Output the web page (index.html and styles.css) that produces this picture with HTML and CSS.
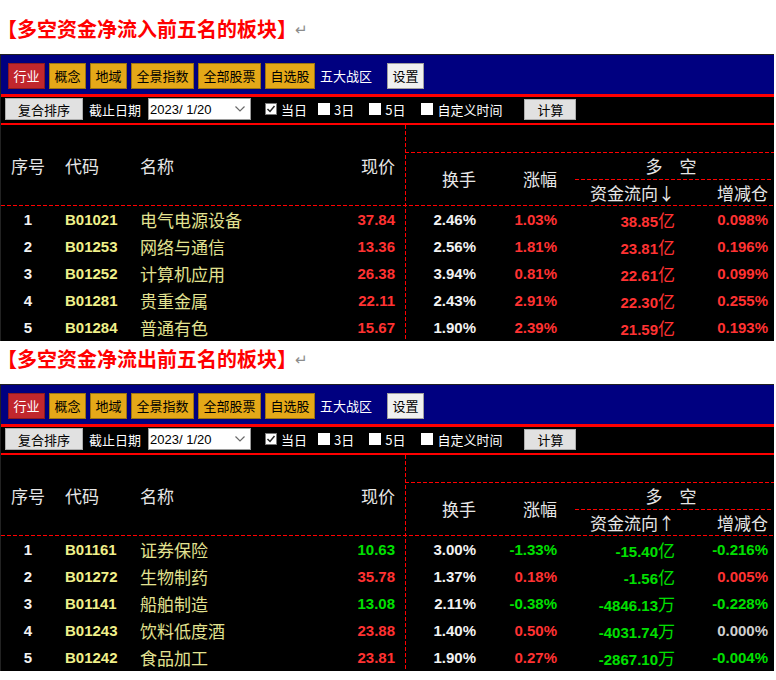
FILE: index.html
```html
<!DOCTYPE html>
<html lang="zh-CN">
<head>
<meta charset="utf-8">
<title>多空资金净流入/流出前五名的板块</title>
<link rel="stylesheet" href="styles.css">
</head>
<body>

<section class="sec sec1">
  <h2 class="title">【多空资金净流入前五名的板块】<span class="ret">↵</span></h2>
  <div class="panel">
    <div class="toolbar">
      <span class="tb-btn red">行业</span>
      <span class="tb-btn gold">概念</span>
      <span class="tb-btn gold">地域</span>
      <span class="tb-btn gold">全景指数</span>
      <span class="tb-btn gold">全部股票</span>
      <span class="tb-btn gold">自选股</span>
      <span class="tb-plain">五大战区</span>
      <span class="tb-btn set">设置</span>
    </div>
    <div class="datebar">
      <span class="gbtn sort">复合排序</span>
      <span class="lbl deadline">截止日期</span>
      <span class="combo"><span class="combo-text">2023/ 1/20</span><svg class="chev" width="10" height="6" viewBox="0 0 10 6"><polyline points="0.5,0.5 5,5 9.5,0.5" fill="none" stroke="#6a6a6a" stroke-width="1.2"/></svg></span>
      <span class="chk chk-day"><svg class="box" width="12" height="12" viewBox="0 0 12 12"><rect x="0.5" y="0.5" width="11" height="11" fill="#fff" stroke="#7a7a7a"/><polyline points="2.5,6 5,8.5 9.5,3" fill="none" stroke="#2a2a2a" stroke-width="1.5"/></svg><span>当日</span></span>
      <span class="chk chk-3"><i class="box-empty"></i><span>3日</span></span>
      <span class="chk chk-5"><i class="box-empty"></i><span>5日</span></span>
      <span class="chk chk-custom"><i class="box-empty"></i><span>自定义时间</span></span>
      <span class="gbtn calc">计算</span>
    </div>
    <div class="tbl">
      <div class="thead">
        <div class="th-left">
          <span class="h-no">序号</span><span class="h-code">代码</span><span class="h-name">名称</span><span class="h-price">现价</span>
        </div>
        <div class="th-right">
          <div class="th-top"></div>
          <div class="th-bottom">
            <span class="h-turn">换手</span>
            <span class="h-chg">涨幅</span>
            <span class="h-gap"></span>
            <div class="h-group">
              <div class="h-group-title">多　空</div>
              <div class="h-group-sub"><span class="h-flow">资金流向↓</span><span class="h-pos">增减仓</span></div>
            </div>
          </div>
        </div>
      </div>
      <div class="row"><span class="c-no">1</span><span class="c-code">B01021</span><span class="c-name">电气电源设备</span><span class="c-price up">37.84</span><span class="c-turn">2.46%</span><span class="c-chg up">1.03%</span><span class="c-flow up">38.85<span class="u">亿</span></span><span class="c-pos up">0.098%</span></div>
      <div class="row"><span class="c-no">2</span><span class="c-code">B01253</span><span class="c-name">网络与通信</span><span class="c-price up">13.36</span><span class="c-turn">2.56%</span><span class="c-chg up">1.81%</span><span class="c-flow up">23.81<span class="u">亿</span></span><span class="c-pos up">0.196%</span></div>
      <div class="row"><span class="c-no">3</span><span class="c-code">B01252</span><span class="c-name">计算机应用</span><span class="c-price up">26.38</span><span class="c-turn">3.94%</span><span class="c-chg up">0.81%</span><span class="c-flow up">22.61<span class="u">亿</span></span><span class="c-pos up">0.099%</span></div>
      <div class="row"><span class="c-no">4</span><span class="c-code">B01281</span><span class="c-name">贵重金属</span><span class="c-price up">22.11</span><span class="c-turn">2.43%</span><span class="c-chg up">2.91%</span><span class="c-flow up">22.30<span class="u">亿</span></span><span class="c-pos up">0.255%</span></div>
      <div class="row"><span class="c-no">5</span><span class="c-code">B01284</span><span class="c-name">普通有色</span><span class="c-price up">15.67</span><span class="c-turn">1.90%</span><span class="c-chg up">2.39%</span><span class="c-flow up">21.59<span class="u">亿</span></span><span class="c-pos up">0.193%</span></div>
    </div>
  </div>
</section>

<section class="sec sec2">
  <h2 class="title">【多空资金净流出前五名的板块】<span class="ret">↵</span></h2>
  <div class="panel">
    <div class="toolbar">
      <span class="tb-btn red">行业</span>
      <span class="tb-btn gold">概念</span>
      <span class="tb-btn gold">地域</span>
      <span class="tb-btn gold">全景指数</span>
      <span class="tb-btn gold">全部股票</span>
      <span class="tb-btn gold">自选股</span>
      <span class="tb-plain">五大战区</span>
      <span class="tb-btn set">设置</span>
    </div>
    <div class="datebar">
      <span class="gbtn sort">复合排序</span>
      <span class="lbl deadline">截止日期</span>
      <span class="combo"><span class="combo-text">2023/ 1/20</span><svg class="chev" width="10" height="6" viewBox="0 0 10 6"><polyline points="0.5,0.5 5,5 9.5,0.5" fill="none" stroke="#6a6a6a" stroke-width="1.2"/></svg></span>
      <span class="chk chk-day"><svg class="box" width="12" height="12" viewBox="0 0 12 12"><rect x="0.5" y="0.5" width="11" height="11" fill="#fff" stroke="#7a7a7a"/><polyline points="2.5,6 5,8.5 9.5,3" fill="none" stroke="#2a2a2a" stroke-width="1.5"/></svg><span>当日</span></span>
      <span class="chk chk-3"><i class="box-empty"></i><span>3日</span></span>
      <span class="chk chk-5"><i class="box-empty"></i><span>5日</span></span>
      <span class="chk chk-custom"><i class="box-empty"></i><span>自定义时间</span></span>
      <span class="gbtn calc">计算</span>
    </div>
    <div class="tbl">
      <div class="thead">
        <div class="th-left">
          <span class="h-no">序号</span><span class="h-code">代码</span><span class="h-name">名称</span><span class="h-price">现价</span>
        </div>
        <div class="th-right">
          <div class="th-top"></div>
          <div class="th-bottom">
            <span class="h-turn">换手</span>
            <span class="h-chg">涨幅</span>
            <span class="h-gap"></span>
            <div class="h-group">
              <div class="h-group-title">多　空</div>
              <div class="h-group-sub"><span class="h-flow">资金流向↑</span><span class="h-pos">增减仓</span></div>
            </div>
          </div>
        </div>
      </div>
      <div class="row"><span class="c-no">1</span><span class="c-code">B01161</span><span class="c-name">证券保险</span><span class="c-price down">10.63</span><span class="c-turn">3.00%</span><span class="c-chg down">-1.33%</span><span class="c-flow down">-15.40<span class="u">亿</span></span><span class="c-pos down">-0.216%</span></div>
      <div class="row"><span class="c-no">2</span><span class="c-code">B01272</span><span class="c-name">生物制药</span><span class="c-price up">35.78</span><span class="c-turn">1.37%</span><span class="c-chg up">0.18%</span><span class="c-flow down">-1.56<span class="u">亿</span></span><span class="c-pos up">0.005%</span></div>
      <div class="row"><span class="c-no">3</span><span class="c-code">B01141</span><span class="c-name">船舶制造</span><span class="c-price down">13.08</span><span class="c-turn">2.11%</span><span class="c-chg down">-0.38%</span><span class="c-flow down">-4846.13<span class="u">万</span></span><span class="c-pos down">-0.228%</span></div>
      <div class="row"><span class="c-no">4</span><span class="c-code">B01243</span><span class="c-name">饮料低度酒</span><span class="c-price up">23.88</span><span class="c-turn">1.40%</span><span class="c-chg up">0.50%</span><span class="c-flow down">-4031.74<span class="u">万</span></span><span class="c-pos flat">0.000%</span></div>
      <div class="row"><span class="c-no">5</span><span class="c-code">B01242</span><span class="c-name">食品加工</span><span class="c-price up">23.81</span><span class="c-turn">1.90%</span><span class="c-chg up">0.27%</span><span class="c-flow down">-2867.10<span class="u">万</span></span><span class="c-pos down">-0.004%</span></div>
    </div>
  </div>
</section>

</body>
</html>
```

FILE: styles.css
```css
* {
  box-sizing: border-box;
  margin: 0;
  padding: 0;
}

body {
  margin: 0;
  width: 776px;
  background: #fff;
  font-family: "Noto Sans CJK SC", "Liberation Sans", sans-serif;
}

/* ---------- section title ---------- */
.title {
  display: flex;
  align-items: center;
  height: 24px;
  margin: 17px 0 13px 0;
  padding-left: 7px;
  font-size: 20px;
  line-height: 24px;
  font-weight: 700;
  font-feature-settings: "halt";
  color: #f00;
  white-space: nowrap;
}

.sec2 .title {
  margin-top: 6px;
}

.ret {
  margin-left: 8px;
  font-size: 15px;
  font-weight: 400;
  color: #8c8c8c;
}

/* ---------- panel ---------- */
.panel {
  width: 774px;
  background: #000;
  border-top: 1px solid #222;
  border-left: 1px solid #222;
}

/* toolbar */
.toolbar {
  display: flex;
  align-items: flex-start;
  gap: 4px;
  height: 42px;
  padding: 8px 0 0 7px;
  background: #000080;
  border-bottom: 3px solid #f00;
}

.tb-btn {
  height: 26px;
  padding: 0 4.5px;
  border: 1px solid;
  font-size: 13px;
  line-height: 24px;
  white-space: nowrap;
}

.red {
  background: #c1272d;
  border-color: #8c1b1f;
  color: #fff;
}

.gold {
  background: #e5a818;
  border-color: #9c7410;
  color: #000;
}

.tb-plain {
  margin-left: 1px;
  font-size: 13px;
  line-height: 26px;
  color: #fff;
}

.set {
  margin-left: 11px;
  background: #f0f0f0;
  border-color: #a0a0a0;
  color: #000;
}

/* date bar */
.datebar {
  display: flex;
  align-items: center;
  height: 28px;
  padding: 0 0 2px 0;
  border-bottom: 2px solid #f00;
  font-size: 13px;
  color: #fff;
  white-space: nowrap;
}

.gbtn {
  display: flex;
  align-items: center;
  justify-content: center;
  height: 22px;
  background: #e1e1e1;
  border: 1px solid #adadad;
  color: #000;
  font-size: 13px;
}

.sort {
  width: 78px;
  margin-left: 4px;
}

.deadline {
  margin-left: 6px;
}

.combo {
  display: flex;
  align-items: center;
  justify-content: space-between;
  width: 103px;
  height: 22px;
  margin-left: 7px;
  padding: 0 5px 0 1px;
  background: #fff;
  border: 1px solid #9a9a9a;
}

.combo-text {
  font-family: "Liberation Sans", Arial, sans-serif;
  font-size: 13px;
  color: #000;
}

.chk {
  display: flex;
  align-items: center;
  gap: 4px;
}

.box-empty {
  display: block;
  width: 12px;
  height: 12px;
  background: #fff;
}

.chk-day {
  margin-left: 14px;
}

.chk-3 {
  margin-left: 11px;
}

.chk-5 {
  margin-left: 15px;
}

.chk-custom {
  margin-left: 16px;
}

.calc {
  width: 52px;
  height: 21px;
  margin-left: 22px;
}

/* ---------- table ---------- */
.tbl {
  background-image: linear-gradient(to bottom, #f00 4px, transparent 4px);
  background-size: 1px 6px;
  background-position: 404px 0;
  background-repeat: repeat-y;
}

.thead {
  display: flex;
  height: 81px;
  padding-bottom: 1px;
  background-image: linear-gradient(to right, #f00 4px, transparent 4px);
  background-size: 6px 1px;
  background-position: 0 100%;
  background-repeat: repeat-x;
  font-size: 17px;
  color: #e6e6e6;
  white-space: nowrap;
}

.th-left {
  display: grid;
  grid-template-columns: 54px 85px 161px 104px;
  align-items: center;
  width: 404px;
  height: 80px;
}

.h-no {
  text-align: center;
}

.h-code {
  padding-left: 10px;
}

.h-price {
  padding-right: 10px;
  text-align: right;
}

.th-right {
  width: 369px;
  height: 80px;
}

.th-top {
  height: 28px;
  background-image: linear-gradient(to right, #f00 4px, transparent 4px);
  background-size: 6px 1px;
  background-position: 0 100%;
  background-repeat: repeat-x;
}

.th-bottom {
  display: flex;
  height: 52px;
}

.h-turn {
  width: 71px;
  line-height: 52px;
  text-align: right;
}

.h-chg {
  width: 81px;
  line-height: 52px;
  text-align: right;
}

.h-gap {
  width: 18px;
}

.h-group {
  width: 198px;
}

.h-group-title {
  height: 27px;
  padding-right: 6px;
  line-height: 26px;
  text-align: center;
  background-image: linear-gradient(to right, #f00 4px, transparent 4px);
  background-size: 6px 1px;
  background-position: 0 100%;
  background-repeat: repeat-x;
}

.h-group-sub {
  display: flex;
  height: 25px;
  line-height: 25px;
}

.h-flow {
  width: 100px;
  text-align: right;
}

.h-pos {
  width: 93px;
  text-align: right;
}

/* rows */
.row {
  display: grid;
  grid-template-columns: 54px 85px 161px 104px 71px 81px 118px 93px;
  height: 27px;
  line-height: 27px;
  font-family: "Liberation Sans", Arial, sans-serif;
  font-size: 15px;
  font-weight: 700;
  color: #f2f2f2;
  white-space: nowrap;
}

.c-no {
  text-align: center;
}

.c-code {
  padding-left: 10px;
  color: #f0f08a;
}

.c-name {
  font-family: "Noto Sans CJK SC", sans-serif;
  font-size: 17px;
  font-weight: 400;
  color: #e2e290;
}

.c-price {
  padding-right: 10px;
  text-align: right;
}

.c-turn,
.c-chg,
.c-flow,
.c-pos {
  text-align: right;
}

.u {
  font-family: "Noto Sans CJK SC", sans-serif;
  font-size: 17px;
  font-weight: 400;
}

.up {
  color: #ff3232;
}

.down {
  color: #00e000;
}

.flat {
  color: #cfcfcf;
}
```
